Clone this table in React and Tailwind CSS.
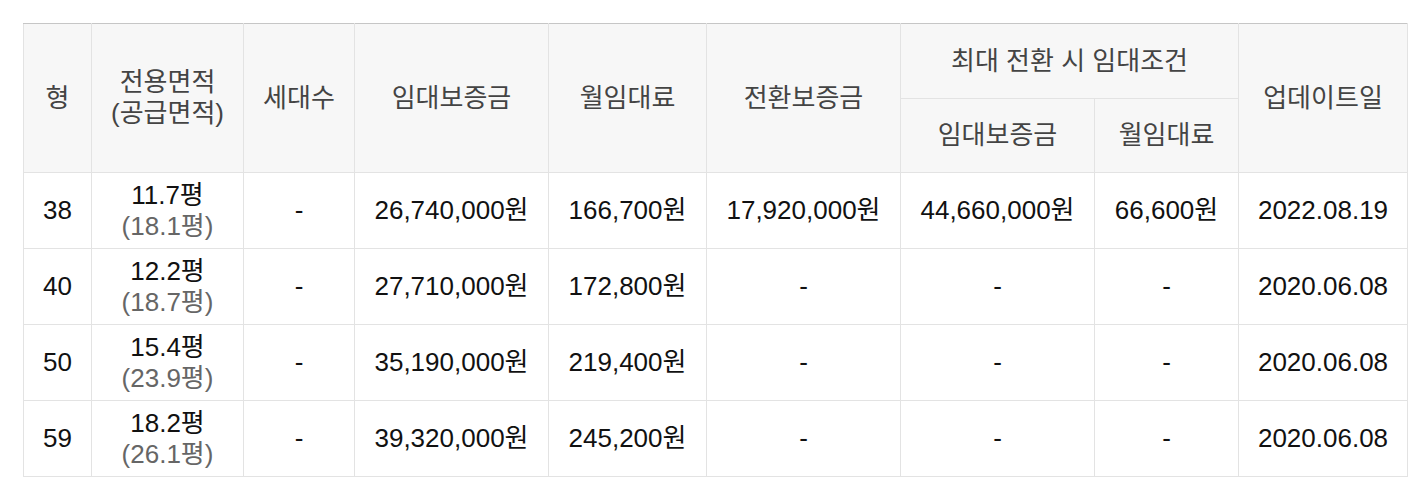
import React from "react";

const rows = [
  { t: "38", a: "11.7평", s: "(18.1평)", n: "-", dep: "26,740,000원", rent: "166,700원", conv: "17,920,000원", mdep: "44,660,000원", mrent: "66,600원", date: "2022.08.19" },
  { t: "40", a: "12.2평", s: "(18.7평)", n: "-", dep: "27,710,000원", rent: "172,800원", conv: "-", mdep: "-", mrent: "-", date: "2020.06.08" },
  { t: "50", a: "15.4평", s: "(23.9평)", n: "-", dep: "35,190,000원", rent: "219,400원", conv: "-", mdep: "-", mrent: "-", date: "2020.06.08" },
  { t: "59", a: "18.2평", s: "(26.1평)", n: "-", dep: "39,320,000원", rent: "245,200원", conv: "-", mdep: "-", mrent: "-", date: "2020.06.08" },
];

const th = "border border-[#e3e3e3] bg-[#f7f7f7] font-normal text-[#444] text-center align-middle leading-[31px]";
const td = "border border-[#e3e3e3] text-center align-middle text-[#111] leading-[31px]";

export default function App() {
  return (
    <div
      className="bg-white w-[1422px] h-[492px] pt-[23px] pl-[23px] text-[26px]"
      style={{ fontFamily: '"Liberation Sans", "Noto Sans CJK KR", sans-serif' }}
    >
      <table className="border-collapse table-fixed w-[1384px] border-t border-t-[#c6c6c6]">
        <colgroup>
          <col className="w-[68px]" />
          <col className="w-[152px]" />
          <col className="w-[111px]" />
          <col className="w-[194px]" />
          <col className="w-[158px]" />
          <col className="w-[194px]" />
          <col className="w-[194px]" />
          <col className="w-[144px]" />
          <col className="w-[169px]" />
        </colgroup>
        <thead>
          <tr className="h-[75px]">
            <th rowSpan={2} className={th + " border-t-[#c6c6c6]"}>형</th>
            <th rowSpan={2} className={th + " border-t-[#c6c6c6]"}>전용면적<br />(공급면적)</th>
            <th rowSpan={2} className={th + " border-t-[#c6c6c6]"}>세대수</th>
            <th rowSpan={2} className={th + " border-t-[#c6c6c6]"}>임대보증금</th>
            <th rowSpan={2} className={th + " border-t-[#c6c6c6]"}>월임대료</th>
            <th rowSpan={2} className={th + " border-t-[#c6c6c6]"}>전환보증금</th>
            <th colSpan={2} className={th + " border-t-[#c6c6c6]"}>최대 전환 시 임대조건</th>
            <th rowSpan={2} className={th + " border-t-[#c6c6c6]"}>업데이트일</th>
          </tr>
          <tr className="h-[74px]">
            <th className={th}>임대보증금</th>
            <th className={th}>월임대료</th>
          </tr>
        </thead>
        <tbody>
          {rows.map((r) => (
            <tr key={r.t} className="h-[76px]">
              <td className={td}>{r.t}</td>
              <td className={td}>
                <div>{r.a}</div>
                <div className="text-[#666]">{r.s}</div>
              </td>
              <td className={td}>{r.n}</td>
              <td className={td}>{r.dep}</td>
              <td className={td}>{r.rent}</td>
              <td className={td}>{r.conv}</td>
              <td className={td}>{r.mdep}</td>
              <td className={td}>{r.mrent}</td>
              <td className={td}>{r.date}</td>
            </tr>
          ))}
        </tbody>
      </table>
    </div>
  );
}
